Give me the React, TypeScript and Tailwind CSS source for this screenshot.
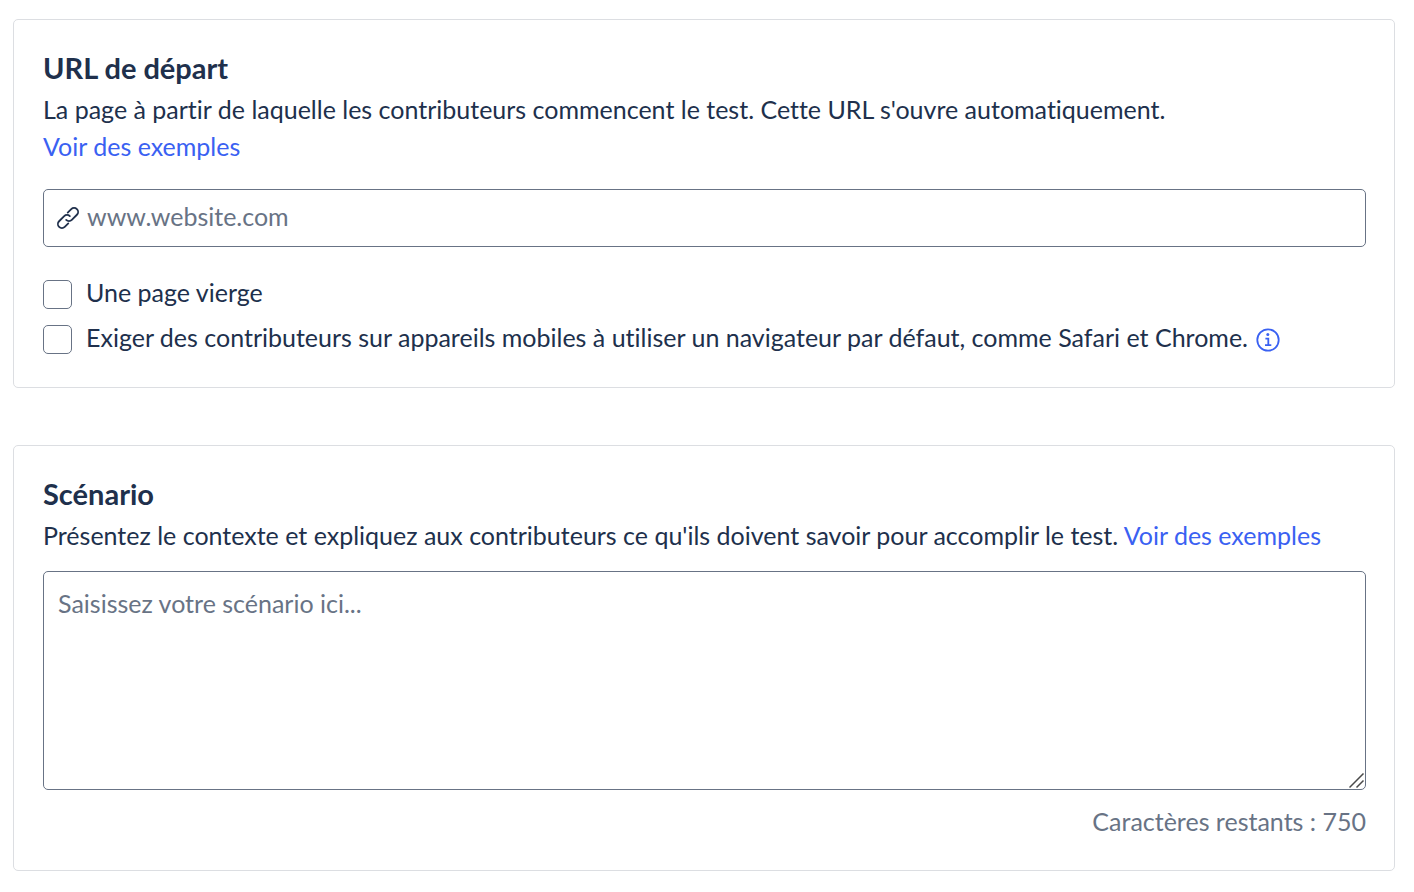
import { useState } from "react";

const MAX_CHARS = 750;

function LinkIcon() {
  return (
    <svg viewBox="0 0 24 24" className="h-6 w-6 shrink-0" fill="none" stroke="#20304c" strokeWidth="1.8" strokeLinecap="round" strokeLinejoin="round" aria-hidden="true">
      <g transform="rotate(-45 12 12)">
        <path d="M15.6 8h5a4 4 0 0 1 0 8h-7.2a4 4 0 0 1-4-4" />
        <path d="M8.4 16h-5a4 4 0 0 1 0-8h7.2a4 4 0 0 1 4 4" />
      </g>
    </svg>
  );
}

function InfoIcon() {
  return (
    <svg viewBox="0 0 24 24" className="h-6 w-6" fill="none" stroke="#3a61f2" strokeWidth="1.8" aria-hidden="true">
      <circle cx="12" cy="12" r="10.7" />
      <circle cx="11.8" cy="6.6" r="1.5" fill="#3a61f2" stroke="none" />
      <path d="M9.4 10.6h2.9v6.4M9 17.2h6.3" />
    </svg>
  );
}

function ResizeGrip() {
  return (
    <svg viewBox="0 0 16 16" className="pointer-events-none absolute right-px bottom-px h-4 w-4" stroke="#4a4a4a" strokeWidth="1.5" aria-hidden="true">
      <path d="M.5 14.5 14.5.5M7.5 14.5l7-7" />
    </svg>
  );
}

const card = "rounded-[5px] border border-[#dcdee2] pt-[29px] pr-7 pb-[30px] pl-[29px]";
const heading = "mb-1 text-[29px] leading-[38px] font-bold";
const checkbox =
  "mt-1 h-[29px] w-[29px] shrink-0 appearance-none rounded-[5px] border border-[#687385] bg-white checked:bg-[#3a61f2]";

export default function App() {
  const [scenario, setScenario] = useState("");

  return (
    <main className="flex flex-col gap-[57px] bg-white pt-[19px] pr-[19px] pb-5 pl-[13px] font-['Lato',sans-serif] text-[25px] leading-[37px] text-[#20304c] [font-variant-ligatures:none]">
      <section className={card}>
        <h2 className={heading}>
          <label htmlFor="url">URL de départ</label>
        </h2>
        <p>
          La page à partir de laquelle les contributeurs commencent le test. Cette URL s'ouvre automatiquement.
          <br />
          <a href="#exemples-url" className="text-[#3a61f2]">Voir des exemples</a>
        </p>
        <div className="mt-6 flex h-[58px] items-center gap-[7px] rounded-[5px] border border-[#687385] px-3">
          <LinkIcon />
          <input
            id="url"
            type="url"
            placeholder="www.website.com"
            className="min-w-0 flex-1 bg-transparent pb-1 outline-none placeholder:text-[#687385]"
          />
        </div>
        <div className="mt-[29px] flex flex-col gap-3 pb-[3px] leading-[33px]">
          <div className="flex items-start gap-[14px]">
            <input id="blank" type="checkbox" className={checkbox} />
            <label htmlFor="blank">Une page vierge</label>
          </div>
          <div className="flex items-start gap-[14px]">
            <input id="browser" type="checkbox" className={checkbox} />
            <div className="flex items-start gap-2">
              <label htmlFor="browser">
                Exiger des contributeurs sur appareils mobiles à utiliser un navigateur par défaut, comme Safari et Chrome.
              </label>
              <button type="button" aria-label="Plus d'informations" className="mt-[7px] shrink-0">
                <InfoIcon />
              </button>
            </div>
          </div>
        </div>
      </section>

      <section className={card}>
        <h2 className={heading}>
          <label htmlFor="scenario">Scénario</label>
        </h2>
        <p>
          Présentez le contexte et expliquez aux contributeurs ce qu'ils doivent savoir pour accomplir le test.{" "}
          <a href="#exemples-scenario" className="text-[#3a61f2]">Voir des exemples</a>
        </p>
        <div className="relative mt-[17px]">
          <textarea
            id="scenario"
            maxLength={MAX_CHARS}
            value={scenario}
            onChange={(e) => setScenario(e.target.value)}
            placeholder="Saisissez votre scénario ici..."
            className="block h-[219px] w-full resize-y rounded-[5px] border border-[#687385] px-[14px] py-[13px] outline-none placeholder:text-[#687385] [&::-webkit-resizer]:bg-transparent"
          />
          <ResizeGrip />
        </div>
        <p className="mt-[13px] text-right text-[#687385]">Caractères restants : {MAX_CHARS - scenario.length}</p>
      </section>
    </main>
  );
}
